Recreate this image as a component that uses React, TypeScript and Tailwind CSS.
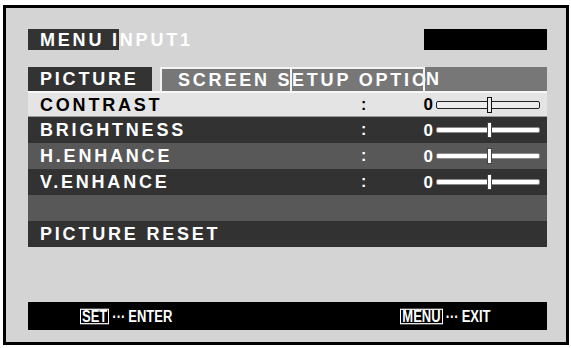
import React from 'react'

type Row = {
  label: string
  slider?: boolean
  tone: 'sel' | 'dark' | 'mid'
}

const rows: Row[] = [
  { label: 'CONTRAST', slider: true, tone: 'sel' },
  { label: 'BRIGHTNESS', slider: true, tone: 'dark' },
  { label: 'H.ENHANCE', slider: true, tone: 'mid' },
  { label: 'V.ENHANCE', slider: true, tone: 'dark' },
  { label: '', tone: 'mid' },
  { label: 'PICTURE RESET', tone: 'dark' },
]

function Slider({ selected }: { selected: boolean }) {
  return (
    <div className="flex items-center gap-[3px]">
      <span
        className={`text-[17px] font-bold leading-none tracking-normal ${
          selected ? 'text-black' : 'text-white'
        }`}
      >
        0
      </span>
      <div
        className={`relative w-[104px] rounded-[2px] border ${
          selected ? 'h-[8px] border-[#222] bg-[#ececec]' : 'h-[6px] border-[#8a8a8a] bg-white'
        }`}
      >
        <div
          className={`absolute left-[50px] top-1/2 h-[16px] w-[5px] -translate-y-1/2 border ${
            selected ? 'border-[#111] bg-[#ececec]' : 'border-[#444] bg-white'
          }`}
        />
      </div>
    </div>
  )
}

export default function App() {
  return (
    <div className="h-[348px] w-[571px] bg-white pl-[3px] pt-[5px] font-['Liberation_Sans',Arial,sans-serif]">
      <div className="flex h-[340px] w-[566px] flex-col border-[3px] border-black bg-[#d4d4d4] pl-[22px] pr-[19px] pt-[21px]">
        {/* header */}
        <div className="flex h-[21px] items-center justify-between">
          <div className="flex h-[21px] w-[200px] items-center bg-[linear-gradient(to_right,#333_91px,transparent_91px)] pl-[12px] text-[18px] font-bold leading-none tracking-[2.8px] text-white">
            MENU INPUT1
          </div>
          <div className="h-[21px] w-[123px] bg-black" />
        </div>

        {/* tabs */}
        <div className="mt-[17px] flex h-[24px] text-[18px] font-bold leading-none tracking-[2.8px] text-white">
          <div className="flex w-[124px] items-center bg-[#333] pl-[12px]">PICTURE</div>
          <div className="ml-[8px] flex flex-1 overflow-hidden bg-[#777]">
            <div className="flex w-[130px] items-center whitespace-nowrap border-l-2 border-t-2 border-[#f4f4f4] pl-[16px]">
              SCREEN S
            </div>
            <div className="flex w-[133px] items-center whitespace-nowrap border-l-2 border-t-2 border-[#f4f4f4]">
              ETUP OPTIO
            </div>
            <div className="flex flex-1 items-center whitespace-nowrap border-l-2 border-[#f4f4f4] pl-[1px]">N</div>
          </div>
        </div>

        {/* rows */}
        <div className="flex flex-col">
          {rows.map((r, i) => {
            const bg =
              r.tone === 'sel'
                ? 'bg-[#e4e4e4] text-black border-t-2 border-[#f8f8f8] border-b border-b-[#9a9a9a]'
                : r.tone === 'dark'
                ? 'bg-[#323232] text-white'
                : 'bg-[#585858] text-white'
            return (
              <div key={i} className={`flex h-[26px] items-center pr-[7px] ${bg}`}>
                <div className="w-[333px] pl-[12px] text-[18px] font-bold leading-none tracking-[2.8px]">
                  {r.label}
                </div>
                {r.slider && (
                  <>
                    <span className="text-[16px] font-bold leading-none">:</span>
                    <div className="ml-auto">
                      <Slider selected={r.tone === 'sel'} />
                    </div>
                  </>
                )}
              </div>
            )
          })}
        </div>

        {/* footer */}
        <div className="mt-[55px] flex h-[28px] items-center bg-black text-[13px] font-bold leading-none text-white">
          <div className="ml-[52px] flex scale-y-[1.2] items-center">
            <span className="border border-white px-[1px] leading-[11px]">SET</span>
            <span className="mx-[3px] tracking-normal">···</span>
            <span>ENTER</span>
          </div>
          <div className="ml-[228px] flex scale-y-[1.2] items-center">
            <span className="border border-white px-[1px] leading-[11px]">MENU</span>
            <span className="mx-[3px] tracking-normal">···</span>
            <span>EXIT</span>
          </div>
        </div>
      </div>
    </div>
  )
}
